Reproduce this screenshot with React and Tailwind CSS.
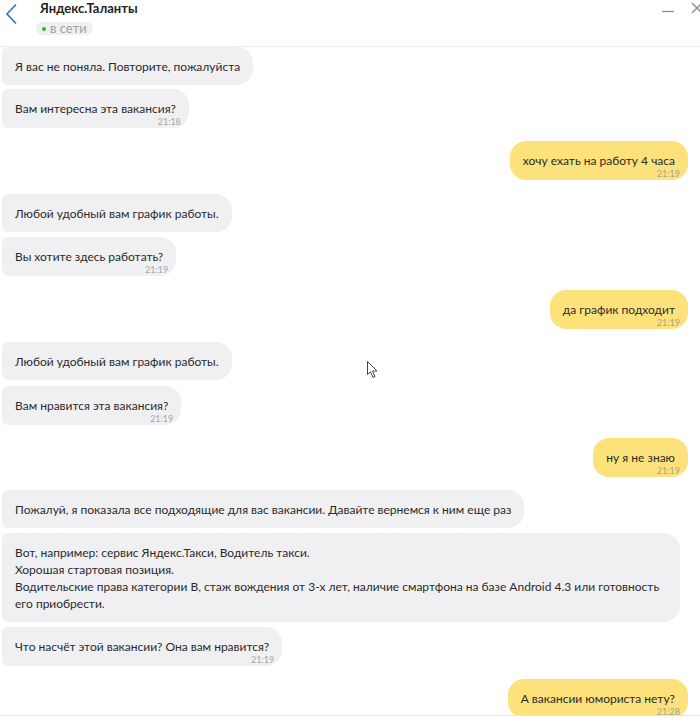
import React from "react";

const messages = [
  { from: "bot", text: "Я вас не поняла. Повторите, пожалуйста", mt: "mt-0" },
  { from: "bot", text: "Вам интересна эта вакансия?", time: "21:18", mt: "mt-[4px]" },
  { from: "me", text: "хочу ехать на работу 4 часа", time: "21:19", mt: "mt-[13px]" },
  { from: "bot", text: "Любой удобный вам график работы.", mt: "mt-[14px]" },
  { from: "bot", text: "Вы хотите здесь работать?", time: "21:19", mt: "mt-[5px]" },
  { from: "me", text: "да график подходит", time: "21:19", mt: "mt-[14px]" },
  { from: "bot", text: "Любой удобный вам график работы.", mt: "mt-[13px]" },
  { from: "bot", text: "Вам нравится эта вакансия?", time: "21:19", mt: "mt-[6px]" },
  { from: "me", text: "ну я не знаю", time: "21:19", mt: "mt-[13px]" },
  {
    from: "bot",
    text: "Пожалуй, я показала все подходящие для вас вакансии. Давайте вернемся к ним еще раз",
    mt: "mt-[13px]",
  },
  {
    from: "bot",
    lines: [
      "Вот, например: сервис Яндекс.Такси, Водитель такси.",
      "Хорошая стартовая позиция.",
      "Водительские права категории B, стаж вождения от 3-х лет, наличие смартфона на базе Android 4.3 или готовность",
      "его приобрести.",
    ],
    mt: "mt-[5px]",
    wide: true,
  },
  { from: "bot", text: "Что насчёт этой вакансии? Она вам нравится?", time: "21:19", mt: "mt-[5px]" },
  { from: "me", text: "А вакансии юмориста нету?", time: "21:28", mt: "mt-[13px]" },
];

const Bubble = ({ msg }) => {
  const mine = msg.from === "me";
  return (
    <div className={`flex ${mine ? "justify-end" : "justify-start"} ${msg.mt}`}>
      <div
        className={`${
          mine ? "bg-[#fde27c] rounded-[16px]" : "bg-[#f0f0f2] rounded-r-[16px] rounded-l-[6px]"
        } ${msg.wide ? "w-[678px]" : ""} px-[13px] pt-[11px] ${msg.time ? "pb-[1px]" : "pb-[10px]"}`}
      >
        <div className="text-[12px] leading-[17px] text-[#2b2b2b] whitespace-nowrap">
          {msg.lines
            ? msg.lines.map((l, i) => <div key={i}>{l}</div>)
            : msg.text}
        </div>
        {msg.time && (
          <div
            className={`text-[9px] leading-[10px] text-right -mr-[5px] ${
              mine ? "text-[#a8a090]" : "text-[#a6a6a6]"
            }`}
          >
            {msg.time}
          </div>
        )}
      </div>
    </div>
  );
};

export default function App() {
  return (
    <div
      className="w-[700px] h-[723px] bg-white overflow-hidden relative flex flex-col"
      style={{ fontFamily: 'Lato, "Noto Sans", sans-serif' }}
    >
      {/* header */}
      <div className="h-[47px] shrink-0 border-b border-[#ececec] flex items-start relative">
        <div className="w-[36px] pl-[5px] pt-[3px]">
          <svg width="13" height="22" viewBox="0 0 13 22" fill="none">
            <path d="M11 1.5 L2 11 L11 20.5" stroke="#2f6fd6" strokeWidth="1.6" />
          </svg>
        </div>
        <div className="flex flex-col pt-[1px]">
          <div className="text-[13px] leading-[14px] font-bold text-[#222] ml-[4px]">
            Яндекс.Таланты
          </div>
          <div className="mt-[7px] h-[13px] w-[57px] rounded-full bg-[#f0f0f2] flex items-center pl-[6px] gap-[4px]">
            <span className="w-[4px] h-[4px] rounded-full bg-[#1ec31e]" />
            <span className="text-[13px] leading-[13px] text-[#a0a0a0]">в сети</span>
          </div>
        </div>
        <div className="ml-auto flex items-start gap-[16px] pt-[2px] -mr-[3px]">
          <svg width="13" height="14" viewBox="0 0 13 14">
            <path d="M0 9.5 H12" stroke="#8a8a8a" strokeWidth="1.3" />
          </svg>
          <svg width="12" height="12" viewBox="0 0 12 12">
            <path d="M1 1 L11 11 M11 1 L1 11" stroke="#8a8a8a" strokeWidth="1.3" />
          </svg>
        </div>
      </div>

      {/* messages */}
      <div className="h-[669px] shrink-0 overflow-hidden pl-[2px] pr-[12px] border-b border-[#e6e6e6]">
        {messages.map((m, i) => (
          <Bubble key={i} msg={m} />
        ))}
      </div>

      {/* mouse cursor */}
      <svg
        className="absolute left-[367px] top-[361px]"
        width="12"
        height="18"
        viewBox="0 0 12 18"
      >
        <path
          d="M0.5 0.5 L0.5 13.5 L3.5 10.8 L6 16.5 L8 15.6 L5.6 10 L10 10 Z"
          fill="white"
          stroke="#444"
          strokeWidth="1"
        />
      </svg>
    </div>
  );
}
